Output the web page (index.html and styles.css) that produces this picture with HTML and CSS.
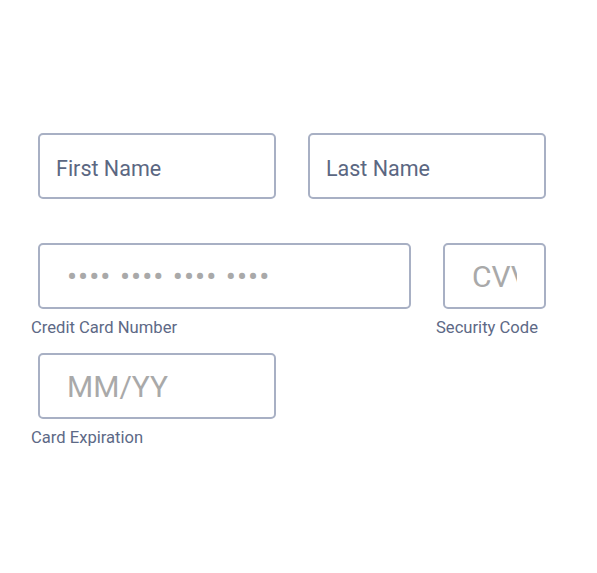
FILE: index.html
```html
<!DOCTYPE html>
<html>
<head>
<meta charset="utf-8">
<link rel="stylesheet" href="styles.css">
</head>
<body>
<form class="form">
  <div class="row row-names">
    <div class="field half">
      <input class="input input-name" type="text" placeholder="First Name">
    </div>
    <div class="field half">
      <input class="input input-name" type="text" placeholder="Last Name">
    </div>
  </div>
  <div class="row row-card">
    <div class="field card">
      <input class="input input-big input-dots" type="text" placeholder="•••• •••• •••• ••••">
      <label class="label">Credit Card Number</label>
    </div>
    <div class="field cvv">
      <input class="input input-big" type="text" placeholder="CVV">
      <label class="label">Security Code</label>
    </div>
  </div>
  <div class="row">
    <div class="field half">
      <input class="input input-big" type="text" placeholder="MM/YY">
      <label class="label">Card Expiration</label>
    </div>
  </div>
</form>
</body>
</html>
```
FILE: styles.css
```css
html, body {
  margin: 0;
  padding: 0;
  background: #ffffff;
}

body {
  font-family: Roboto, "Liberation Sans", sans-serif;
}

.form {
  width: 521px;
  padding: 133px 0 0 31px;
  display: flex;
  flex-direction: column;
}

.row {
  display: flex;
  gap: 19px;
}

.row-names {
  margin-bottom: 44px;
}

.row-card {
  margin-bottom: 16px;
}

.field {
  display: flex;
  flex-direction: column;
}

.half {
  width: 251px;
}

.card {
  width: 386px;
}

.cvv {
  width: 116px;
}

.input {
  box-sizing: border-box;
  height: 66px;
  margin: 0 6px 0 7px;
  border: 2px solid #a8b0c4;
  border-radius: 5px;
  background: #ffffff;
  font-family: Roboto, "Liberation Sans", sans-serif;
  outline: none;
}

.input-name {
  padding: 5px 16px 0;
  font-size: 21.5px;
}

.input-name::placeholder {
  color: #5b6782;
  opacity: 1;
}

.input-big {
  padding: 1px 27px 0;
  font-size: 30px;
}

.input-dots {
  letter-spacing: 1px;
}

.input-big::placeholder {
  color: #a9a9a9;
  opacity: 1;
}

.label {
  margin-top: 9px;
  font-size: 16.6px;
  line-height: 19px;
  color: #5d6986;
}
```
